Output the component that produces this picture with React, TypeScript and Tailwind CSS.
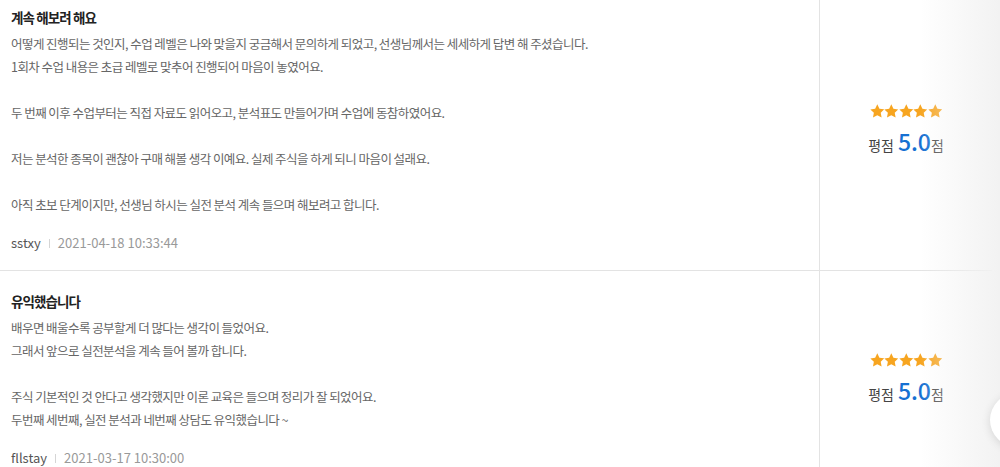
const reviews = [
  {
    title: "계속 해보려 해요",
    lines: [
      "어떻게 진행되는 것인지, 수업 레벨은 나와 맞을지 궁금해서 문의하게 되었고, 선생님께서는 세세하게 답변 해 주셨습니다.",
      "1회차 수업 내용은 초급 레벨로 맞추어 진행되어 마음이 놓였어요.",
      "",
      "두 번째 이후 수업부터는 직접 자료도 읽어오고, 분석표도 만들어가며 수업에 동참하였어요.",
      "",
      "저는 분석한 종목이 괜찮아 구매 해볼 생각 이예요. 실제 주식을 하게 되니 마음이 설래요.",
      "",
      "아직 초보 단계이지만, 선생님 하시는 실전 분석 계속 들으며 해보려고 합니다.",
    ],
    author: "sstxy",
    date: "2021-04-18 10:33:44",
    score: "5.0",
  },
  {
    title: "유익했습니다",
    lines: [
      "배우면 배울수록 공부할게 더 많다는 생각이 들었어요.",
      "그래서 앞으로 실전분석을 계속 들어 볼까 합니다.",
      "",
      "주식 기본적인 것 안다고 생각했지만 이론 교육은 들으며 정리가 잘 되었어요.",
      "두번째 세번째, 실전 분석과 네번째 상담도 유익했습니다 ~",
    ],
    author: "fllstay",
    date: "2021-03-17 10:30:00",
    score: "5.0",
  },
];

function Stars() {
  return (
    <div className="flex">
      {[0, 1, 2, 3, 4].map((i) => (
        <svg key={i} viewBox="0 0 20 19" className="h-[14px] w-[14.6px]">
          <path
            d="M10 0.4l2.9 6 6.6.9-4.8 4.5 1.2 6.5L10 15.2l-5.9 3.1 1.2-6.5L0.5 7.3l6.6-.9z"
            fill="#f7a520"
          />
        </svg>
      ))}
    </div>
  );
}

export default function App() {
  return (
    <div
      className="relative h-[467px] w-[1000px] overflow-hidden bg-white"
      style={{ fontFamily: '"Noto Sans CJK KR", "Noto Sans", sans-serif' }}
    >
      <div className="-mt-[13px] w-[992px]">
        {reviews.map((r, idx) => (
          <div key={idx} className="flex border-b border-[#e3e3e3]">
            <div className="flex-1 border-r border-[#e3e3e3] pl-[11px] pt-[20px] pb-[17px]">
              <h3 className="text-[13.5px] font-bold leading-[20px] tracking-[-0.9px] text-[#222]">
                {r.title}
              </h3>
              <div className="mt-[5px] text-[12.5px] leading-[23px] tracking-[-0.55px] text-[#666]">
                {r.lines.map((l, i) => (
                  <p key={i} className="h-[23px]">
                    {l}
                  </p>
                ))}
              </div>
              <div className="mt-[17px] flex items-center text-[13px] leading-[20px]">
                <span className="text-[#555]">{r.author}</span>
                <span className="mx-[8px] h-[9px] w-px bg-[#d5d5d5]" />
                <span className="text-[#999]">{r.date}</span>
              </div>
            </div>
            <div className="flex w-[172px] flex-col items-center justify-center gap-[12px] pt-[2px]">
              <Stars />
              <div className="flex items-baseline text-[14px] text-[#444]">
                <span>평점</span>
                <span className="ml-[4px] text-[23px] font-medium leading-none text-[#1670d2]">
                  {r.score}
                </span>
                <span>점</span>
              </div>
            </div>
          </div>
        ))}
      </div>
      <div className="pointer-events-none absolute right-0 top-0 h-full w-[80px] bg-gradient-to-l from-[#f2f2f2] to-transparent" />
      <div className="absolute left-[990px] top-[393px] h-[54px] w-[54px] rounded-full bg-white shadow-[0_2px_10px_rgba(0,0,0,0.12)]" />
    </div>
  );
}
